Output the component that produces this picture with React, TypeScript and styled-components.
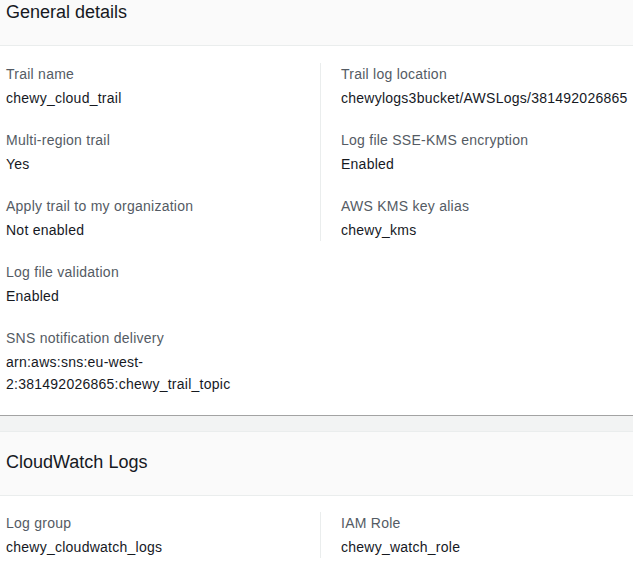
import React from "react";
import styled, { createGlobalStyle } from "styled-components";

const Global = createGlobalStyle`
  html, body { margin: 0; padding: 0; background: #f2f3f3; }
  body { font-family: "Liberation Sans", Arial, sans-serif; -webkit-font-smoothing: antialiased; }
`;

const Page = styled.div`
  display: flex;
  flex-direction: column;
  width: 633px;
  overflow: hidden;
`;

const Panel = styled.section<{ $top?: boolean }>`
  background: #ffffff;
  border-top: ${(p) => (p.$top ? "none" : "1px solid #eaeded")};
  border-bottom: 1px solid #a3a3a3;
`;

const Spacer = styled.div`
  height: 15px;
  background: #f2f3f3;
`;

const Header = styled.div<{ $pad: number; $h: number }>`
  background: #fafafa;
  border-bottom: 1px solid #eaeded;
  padding: ${(p) => p.$pad}px 6px 0;
  height: ${(p) => p.$h}px;
  box-sizing: content-box;
`;

const Title = styled.h2`
  margin: 0;
  font-size: 18px;
  line-height: 22px;
  font-weight: 400;
  color: #16191f;
`;

const Body = styled.div<{ $pt: number; $pb: number }>`
  display: grid;
  grid-template-columns: 314px 1fr;
  align-items: start;
  padding: ${(p) => p.$pt}px 0 ${(p) => p.$pb}px 6px;
`;

const Column = styled.div<{ $divider?: boolean }>`
  display: flex;
  flex-direction: column;
  gap: 20px;
  ${(p) => (p.$divider ? "border-left: 1px solid #eaeded; padding-left: 20px;" : "")}
`;

const Item = styled.div`
  display: flex;
  flex-direction: column;
  gap: 2px;
`;

const Label = styled.div`
  font-size: 14px;
  line-height: 22px;
  letter-spacing: 0.25px;
  color: #545b64;
`;

const Value = styled.div`
  font-size: 14px;
  line-height: 22px;
  letter-spacing: 0.25px;
  color: #16191f;
  max-width: 280px;
`;

type Field = { label: string; value: React.ReactNode };

const FieldColumn = ({ fields, divider }: { fields: Field[]; divider?: boolean }) => (
  <Column $divider={divider}>
    {fields.map((f) => (
      <Item key={f.label}>
        <Label>{f.label}</Label>
        <Value>{f.value}</Value>
      </Item>
    ))}
  </Column>
);

export default function App() {
  return (
    <Page>
      <Global />
      <Panel $top>
        <Header $pad={1} $h={44}>
          <Title>General details</Title>
        </Header>
        <Body $pt={17} $pb={20}>
          <FieldColumn
            fields={[
              { label: "Trail name", value: "chewy_cloud_trail" },
              { label: "Multi-region trail", value: "Yes" },
              { label: "Apply trail to my organization", value: "Not enabled" },
              { label: "Log file validation", value: "Enabled" },
              {
                label: "SNS notification delivery",
                value: (
                  <>
                    arn:aws:sns:eu-west-
                    <br />
                    2:381492026865:chewy_trail_topic
                  </>
                ),
              },
            ]}
          />
          <FieldColumn
            divider
            fields={[
              { label: "Trail log location", value: "chewylogs3bucket/AWSLogs/381492026865" },
              { label: "Log file SSE-KMS encryption", value: "Enabled" },
              { label: "AWS KMS key alias", value: "chewy_kms" },
            ]}
          />
        </Body>
      </Panel>
      <Spacer />
      <Panel>
        <Header $pad={19} $h={44}>
          <Title>CloudWatch Logs</Title>
        </Header>
        <Body $pt={16} $pb={20}>
          <FieldColumn fields={[{ label: "Log group", value: "chewy_cloudwatch_logs" }]} />
          <FieldColumn divider fields={[{ label: "IAM Role", value: "chewy_watch_role" }]} />
        </Body>
      </Panel>
    </Page>
  );
}
